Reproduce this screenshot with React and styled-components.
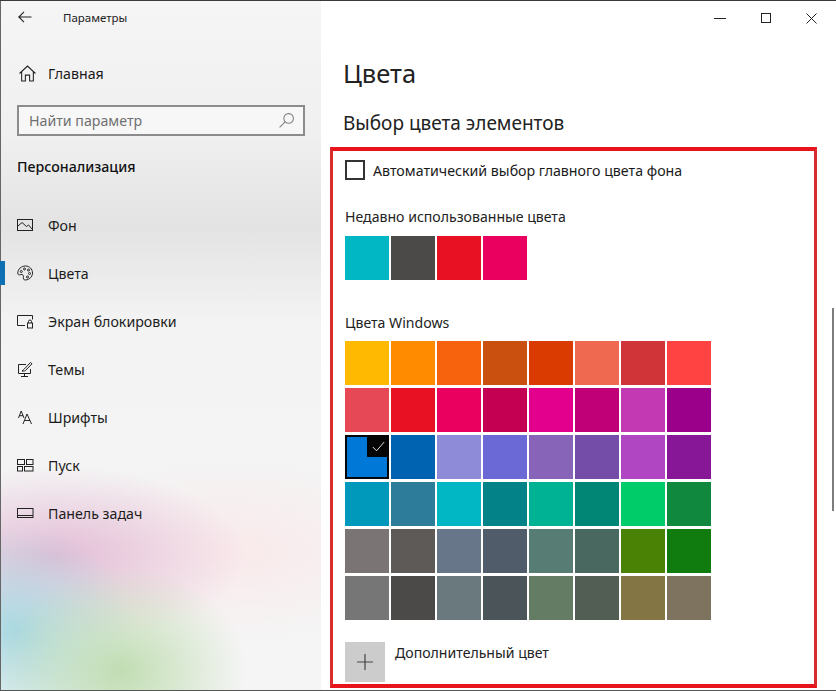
import React from 'react';
import styled, { createGlobalStyle } from 'styled-components';

const GlobalStyle = createGlobalStyle`
  html, body {
    margin: 0;
    padding: 0;
    background: #fff;
  }
  body {
    font-family: 'Noto Sans', 'Open Sans', sans-serif;
    color: #1a1a1a;
  }
`;

const Window = styled.div`
  position: relative;
  display: flex;
  width: 836px;
  height: 691px;
  box-sizing: border-box;
  border-top: 1px solid #3a3a3a;
  border-bottom: 1px solid #555;
  overflow: hidden;
  background: #fff;
`;

const Sidebar = styled.aside`
  width: 321px;
  flex: none;
  box-sizing: border-box;
  border-left: 1px solid #666;
  background:
    radial-gradient(ellipse 125px 105px at 120px 670px, rgba(190, 220, 175, 0.95), rgba(190, 220, 175, 0) 100%),
    radial-gradient(ellipse 120px 105px at 15px 630px, rgba(165, 215, 225, 0.95), rgba(165, 215, 225, 0) 100%),
    radial-gradient(ellipse 190px 90px at 55px 555px, rgba(226, 185, 212, 0.95), rgba(226, 185, 212, 0) 100%),
    radial-gradient(ellipse 200px 90px at 230px 550px, rgba(250, 232, 234, 0.9), rgba(250, 232, 234, 0) 100%),
    linear-gradient(#f5f5f5 0, #f0f0f0 130px, #e3e3e3 225px, #f3f3f3 320px, #f5f5f5 100%);
`;

const TitleBar = styled.div`
  display: flex;
  align-items: center;
  height: 33px;
  padding-left: 17px;
  font-size: 11.5px;
  color: #222;
`;

const BackIcon = styled.svg`
  width: 14px;
  height: 12px;
  margin-right: 31px;
  margin-top: -2px;
`;

const HomeRow = styled.div`
  display: flex;
  align-items: center;
  height: 48px;
  margin-top: 15px;
  padding-left: 18px;
  gap: 12px;
  font-size: 14.2px;
`;

const SearchBox = styled.div`
  display: flex;
  align-items: center;
  justify-content: space-between;
  box-sizing: border-box;
  width: 288px;
  height: 31px;
  margin: 8px 0 0 16px;
  padding: 0 8px 0 10px;
  border: 2px solid #8c8c8c;
  background: #f7f7f7;
  font-size: 14.2px;
  color: #707070;
`;

const GroupTitle = styled.div`
  margin: 20px 0 24px 16px;
  height: 21px;
  line-height: 21px;
  font-size: 14.2px;
  font-weight: 500;
  color: #111;
`;

const NavItem = styled.div`
  position: relative;
  display: flex;
  align-items: center;
  height: 48px;
  padding-left: 16px;
  gap: 14px;
  font-size: 14.2px;
  color: #1c1c1c;

  &::before {
    content: '';
    display: ${(p) => (p.$active ? 'block' : 'none')};
    position: absolute;
    left: -1px;
    top: 12px;
    width: 5px;
    height: 24px;
    background: #0f6fb3;
  }
`;

const NavIcon = styled.svg`
  width: 17px;
  height: 17px;
  flex: none;
  fill: none;
  stroke: ${(p) => p.$stroke || '#222'};
  stroke-width: 1;
`;

const Main = styled.main`
  flex: 1;
  min-width: 0;
  padding-left: 9px;
`;

const Controls = styled.div`
  display: flex;
  justify-content: flex-end;
  align-items: center;
  height: 34px;
  padding-right: 19px;
  gap: 35px;
`;

const ControlIcon = styled.svg`
  width: ${(p) => p.$size}px;
  height: ${(p) => p.$size}px;
  fill: none;
  stroke: #222;
  stroke-width: 1;
`;

const PageTitle = styled.h1`
  margin: 18px 0 0 13px;
  height: 40px;
  line-height: 40px;
  font-size: 25.5px;
  font-weight: 400;
  color: #222;
`;

const SectionTitle = styled.h2`
  margin: 16px 0 0 13px;
  height: 28px;
  line-height: 28px;
  font-size: 19px;
  font-weight: 400;
  color: #222;
`;

const Frame = styled.section`
  box-sizing: border-box;
  width: 487px;
  height: 541px;
  margin-top: 10px;
  padding: 8px 0 0 12px;
  border: 3px solid #d92c2c;
  border-top: 4px solid #e8141c;
  border-bottom: 4px solid #e8141c;
`;

const CheckRow = styled.div`
  display: flex;
  align-items: center;
  gap: 8px;
  height: 22px;
  font-size: 14.2px;
`;

const CheckBox = styled.span`
  box-sizing: border-box;
  width: 20px;
  height: 20px;
  border: 2px solid #333;
`;

const Label = styled.div`
  height: 20px;
  line-height: 20px;
  font-size: 14.1px;
  margin-top: ${(p) => p.$top}px;
  margin-bottom: ${(p) => p.$bottom}px;
  color: #222;
`;

const Swatches = styled.div`
  display: grid;
  grid-template-columns: repeat(8, 44px);
  grid-auto-rows: 44px;
  column-gap: 2px;
  row-gap: 3px;
`;

const Swatch = styled.div`
  position: relative;
  box-sizing: border-box;
  background: ${(p) => p.$color};
  border: ${(p) => (p.$selected ? '2px solid #050505' : 'none')};
`;

const CheckCorner = styled.div`
  position: absolute;
  top: -2px;
  right: -2px;
  display: flex;
  align-items: center;
  justify-content: center;
  width: 22px;
  height: 22px;
  background: #050505;
`;

const AddRow = styled.div`
  display: flex;
  align-items: flex-start;
  gap: 10px;
  margin-top: 22px;
  font-size: 14.1px;
  line-height: 22px;
  color: #222;
`;

const AddButton = styled.div`
  display: flex;
  align-items: center;
  justify-content: center;
  width: 40px;
  height: 40px;
  background: #cccccc;
`;

const Scrollbar = styled.div`
  position: absolute;
  right: 2px;
  top: 307px;
  width: 2px;
  height: 203px;
  background: #7d7d7d;
`;

const recent = ['#00b7c3', '#4c4a48', '#e81123', '#ea005e'];

const palette = [
  '#ffb900', '#ff8c00', '#f7630c', '#ca5010', '#da3b01', '#ef6950', '#d13438', '#ff4343',
  '#e74856', '#e81123', '#ea005e', '#c30052', '#e3008c', '#bf0077', '#c239b3', '#9a0089',
  '#0078d7', '#0063b1', '#8e8cd8', '#6b69d6', '#8764b8', '#744da9', '#b146c2', '#881798',
  '#0099bc', '#2d7d9a', '#00b7c3', '#038387', '#00b294', '#018574', '#00cc6a', '#10893e',
  '#7a7574', '#5d5a58', '#68768a', '#515c6b', '#567c73', '#486860', '#498205', '#107c10',
  '#767676', '#4c4a48', '#69797e', '#4a5459', '#647c64', '#525e54', '#847545', '#7e735f',
];

const navItems = [
  {
    label: 'Фон',
    icon: (
      <>
        <rect x="0.5" y="2.5" width="15" height="11" />
        <path d="M1 9l4-3.5 4.5 4 2-1.5 3.5 4" />
      </>
    ),
  },
  {
    label: 'Цвета',
    active: true,
    icon: (
      <>
        <path d="M8.5 1C4.4 1 .8 4 .8 8.2c0 1.3.9 1.9 1.9 1.6 1.5-.5 3.2-.6 3.6.8.4 1.4-.5 3 1 4.3 3.7.6 8.2-2.3 8.2-6.9C15.5 4 12.5 1 8.5 1z" />
        <circle cx="4.3" cy="6.5" r="1" />
        <circle cx="7.5" cy="4" r="1" />
        <circle cx="11.5" cy="5" r="1" />
        <circle cx="12.5" cy="8.5" r="1" />
        <circle cx="10.5" cy="12" r="1" />
      </>
    ),
  },
  {
    label: 'Экран блокировки',
    icon: (
      <>
        <path d="M8 12.5H.5v-10h15v4" />
        <rect x="10.5" y="10" width="5" height="5" />
        <path d="M11.5 10V8.5a1.5 1.5 0 0 1 3 0V10" />
      </>
    ),
  },
  {
    label: 'Темы',
    icon: (
      <>
        <path d="M9 3.5H1.5v9h12V8" />
        <path d="M7.5 12.5v2.5M4 15.5h7" />
        <path d="M5 10c1-.3 1.3-1.5 2.3-2L13.5 1.5l1.5 1.3L9 9c-.6 1-2.5 1.3-4 1z" />
      </>
    ),
  },
  {
    label: 'Шрифты',
    icon: (
      <>
        <path d="M1.5 9l2.7-7L7 9M2.5 6.7h3.5" />
        <path d="M6 15l4-10 4.5 10M7.500 11.5h5.5" />
      </>
    ),
  },
  {
    label: 'Пуск',
    icon: (
      <>
        <rect x="0.5" y="2.5" width="7" height="5" />
        <rect x="9.5" y="2.5" width="6.5" height="5" />
        <rect x="0.5" y="9.5" width="5" height="4.5" />
        <rect x="7.5" y="9.5" width="8.5" height="4.5" />
      </>
    ),
  },
  {
    label: 'Панель задач',
    icon: (
      <>
        <rect x="0.5" y="3.5" width="15.5" height="9" />
        <path d="M1 10.5h15" />
      </>
    ),
  },
];

export default function App() {
  return (
    <>
      <GlobalStyle />
      <Window>
        <Sidebar>
          <TitleBar>
            <BackIcon viewBox="0 0 14 12" fill="none" stroke="#222" strokeWidth="1.1">
              <path d="M13.5 6H1M6 .8 .8 6 6 11.2" />
            </BackIcon>
            Параметры
          </TitleBar>
          <HomeRow>
            <NavIcon viewBox="0 0 16 16">
              <path d="M.5 8 8 1l7.5 7M2.5 6.5V15H6V9.5h4V15h3.5V6.5" />
            </NavIcon>
            Главная
          </HomeRow>
          <SearchBox>
            Найти параметр
            <NavIcon viewBox="0 0 16 16" $stroke="#808080">
              <circle cx="10" cy="6" r="4.5" />
              <path d="M6.7 9.3 1.5 14.5" />
            </NavIcon>
          </SearchBox>
          <GroupTitle>Персонализация</GroupTitle>
          {navItems.map((item) => (
            <NavItem key={item.label} $active={item.active}>
              <NavIcon viewBox="0 0 17 17">{item.icon}</NavIcon>
              {item.label}
            </NavItem>
          ))}
        </Sidebar>
        <Main>
          <Controls>
            <ControlIcon $size={12} viewBox="0 0 12 12">
              <path d="M0 6.5h12" />
            </ControlIcon>
            <ControlIcon $size={10} viewBox="0 0 10 10">
              <rect x="0.5" y="0.5" width="9" height="9" />
            </ControlIcon>
            <ControlIcon $size={11} viewBox="0 0 11 11">
              <path d="M.5.5l10 10M10.5.5l-10 10" />
            </ControlIcon>
          </Controls>
          <PageTitle>Цвета</PageTitle>
          <SectionTitle>Выбор цвета элементов</SectionTitle>
          <Frame>
            <CheckRow>
              <CheckBox />
              Автоматический выбор главного цвета фона
            </CheckRow>
            <Label $top={26} $bottom={9}>Недавно использованные цвета</Label>
            <Swatches>
              {recent.map((color) => (
                <Swatch key={color} $color={color} />
              ))}
            </Swatches>
            <Label $top={33} $bottom={8}>Цвета Windows</Label>
            <Swatches>
              {palette.map((color, i) => (
                <Swatch key={color + i} $color={color} $selected={i === 16}>
                  {i === 16 && (
                    <CheckCorner>
                      <svg width="13" height="11" viewBox="0 0 13 11" fill="none" stroke="#ddd" strokeWidth="1">
                        <path d="M.8 6 4.6 9.8 12.2 1" />
                      </svg>
                    </CheckCorner>
                  )}
                </Swatch>
              ))}
            </Swatches>
            <AddRow>
              <AddButton>
                <svg width="18" height="18" viewBox="0 0 18 18" fill="none" stroke="#444" strokeWidth="1.2">
                  <path d="M9 1v16M1 9h16" />
                </svg>
              </AddButton>
              Дополнительный цвет
            </AddRow>
          </Frame>
        </Main>
        <Scrollbar />
      </Window>
    </>
  );
}
